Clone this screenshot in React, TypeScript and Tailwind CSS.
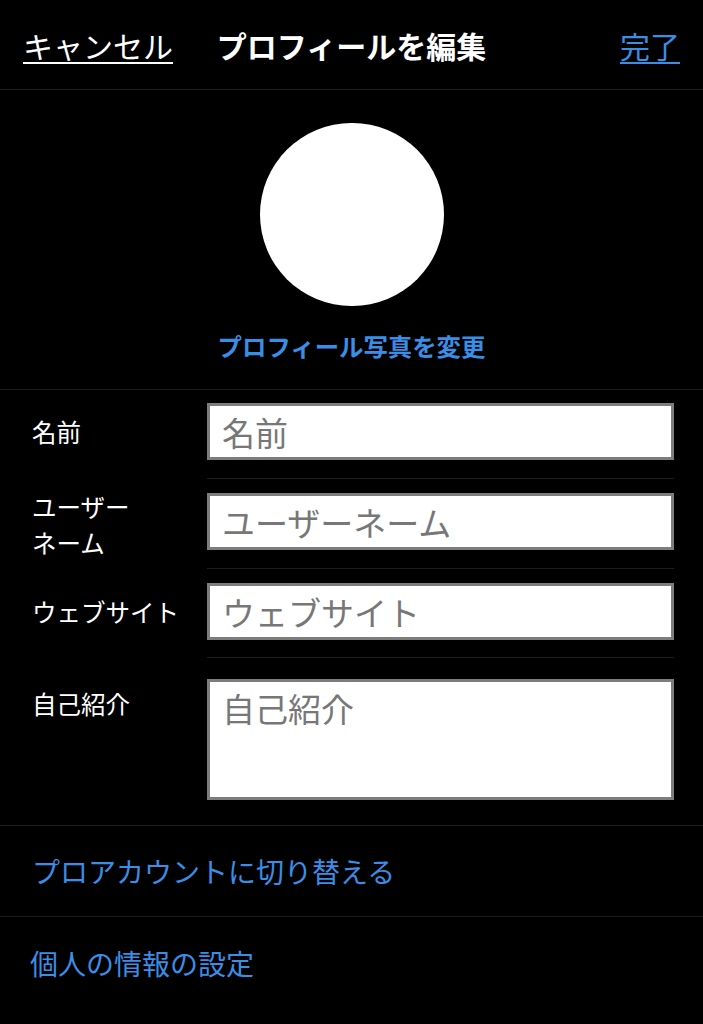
const font = { fontFamily: '"Noto Sans CJK JP", "Noto Sans", sans-serif' };

function Field({
  label,
  placeholder,
  labelClass = '',
}: {
  label: React.ReactNode;
  placeholder: string;
  labelClass?: string;
}) {
  return (
    <div className="flex items-center">
      <div className={`w-[175px] shrink-0 text-[24.5px] leading-[36px] text-white ${labelClass}`}>{label}</div>
      <input
        placeholder={placeholder}
        className="h-[57px] min-w-0 flex-1 border-[3px] border-[#7d7d7d] bg-white px-[12px] text-[33px] text-black outline-none placeholder:text-[#777]"
        style={font}
      />
    </div>
  );
}

function Sep() {
  return <div className="ml-[175px] h-px bg-[#1d1d1d]" />;
}

export default function App() {
  return (
    <div className="min-h-[1024px] w-[703px] bg-black" style={font}>
      <header className="relative flex h-[90px] items-center justify-between border-b border-[#1c1c1c] px-[23px]">
        <span className="text-[30px] leading-none text-white underline decoration-[2px] underline-offset-[4px]">
          キャンセル
        </span>
        <span className="absolute left-1/2 -translate-x-1/2 text-[30px] leading-none font-bold text-white">
          プロフィールを編集
        </span>
        <span className="text-[30px] leading-none text-[#3a8ee6] underline decoration-[2px] underline-offset-[4px]">
          完了
        </span>
      </header>

      <section className="flex flex-col items-center border-b border-[#1c1c1c] pt-[33px] pb-[29px]">
        <div className="h-[183px] w-[184px] rounded-full bg-white" />
        <button className="mt-[26px] text-[24.4px] leading-[28px] font-bold text-[#3a8ee6]">
          プロフィール写真を変更
        </button>
      </section>

      <section className="border-b border-[#1c1c1c] pr-[29px] pl-[32px]">
        <div className="pt-[13px] pb-[18px]">
          <Field label="名前" placeholder="名前" />
        </div>
        <Sep />
        <div className="pt-[14px] pb-[18px]">
          <Field
            labelClass="-mt-[4px] -mb-[11px]"
            label={
              <>
                ユーザー
                <br />
                ネーム
              </>
            }
            placeholder="ユーザーネーム"
          />
        </div>
        <Sep />
        <div className="pt-[14px] pb-[17px]">
          <Field label="ウェブサイト" placeholder="ウェブサイト" />
        </div>
        <Sep />
        <div className="flex items-start pt-[21px] pb-[25px]">
          <div className="mt-[7px] w-[175px] shrink-0 text-[24.5px] leading-[36px] text-white">自己紹介</div>
          <textarea
            placeholder="自己紹介"
            className="h-[121px] min-w-0 flex-1 resize-none border-[3px] border-[#7d7d7d] bg-white px-[12px] py-[6px] text-[33px] leading-[40px] text-black outline-none placeholder:text-[#777]"
            style={font}
          />
        </div>
      </section>

      <div className="flex h-[91px] items-center border-b border-[#1c1c1c] px-[32px] text-[28px] text-[#3a8ee6]">
        プロアカウントに切り替える
      </div>
      <div className="flex h-[91px] items-center px-[30px] text-[28px] text-[#3a8ee6]">個人の情報の設定</div>
    </div>
  );
}
